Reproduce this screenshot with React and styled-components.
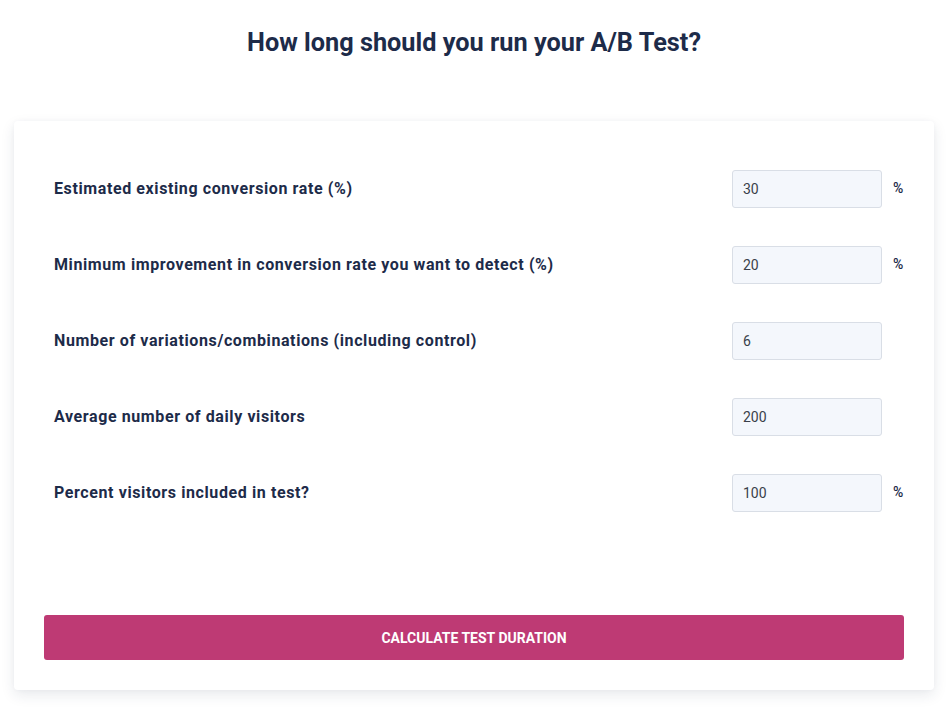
import React, { useState } from 'react'
import styled, { createGlobalStyle } from 'styled-components'

const Global = createGlobalStyle`
  html, body {
    margin: 0;
    padding: 0;
    background: #fff;
    font-family: Roboto, "Liberation Sans", Arial, sans-serif;
  }
`

const Page = styled.div`
  padding: 0 15px 24px 14px;
`

const Title = styled.h1`
  margin: 0;
  padding-top: 28px;
  height: 121px;
  box-sizing: border-box;
  text-align: center;
  font-size: 25.3px;
  font-weight: 700;
  line-height: 30px;
  color: #1d2b49;
`

const Card = styled.div`
  background: #fff;
  border-radius: 4px;
  box-shadow: 0 5px 14px rgba(30, 45, 80, 0.1), 0 0 4px rgba(30, 45, 80, 0.03);
  padding: 49px 30px 30px;
`

const Rows = styled.div`
  display: flex;
  flex-direction: column;
  gap: 38px;
  padding-left: 10px;
`

const Row = styled.div`
  display: flex;
  align-items: center;
`

const Label = styled.label`
  flex: 1;
  font-size: 16px;
  font-weight: 700;
  letter-spacing: 0.6px;
  color: #1d2b49;
  margin-top: -1px;
`

const Input = styled.input`
  width: 150px;
  height: 38px;
  box-sizing: border-box;
  border: 1px solid #d9dee6;
  border-radius: 3px;
  background: #f4f7fc;
  padding: 0 10px;
  font-family: inherit;
  font-size: 14px;
  color: #3a3f4a;
  outline: none;
`

const Unit = styled.span`
  width: 22px;
  padding-left: 11px;
  box-sizing: border-box;
  font-size: 14px;
  font-weight: 500;
  color: #1d2b49;
  margin-top: -2px;
`

const Button = styled.button`
  display: block;
  width: 100%;
  height: 45px;
  margin-top: 103px;
  border: none;
  border-radius: 3px;
  background: #be3a74;
  color: #fff;
  font-family: inherit;
  font-size: 14px;
  font-weight: 700;
  text-transform: uppercase;
  cursor: pointer;
`

const fields = [
  { key: 'rate', label: 'Estimated existing conversion rate (%)', value: '30', unit: '%' },
  { key: 'imp', label: 'Minimum improvement in conversion rate you want to detect (%)', value: '20', unit: '%' },
  { key: 'vars', label: 'Number of variations/combinations (including control)', value: '6', unit: '' },
  { key: 'daily', label: 'Average number of daily visitors', value: '200', unit: '' },
  { key: 'pct', label: 'Percent visitors included in test?', value: '100', unit: '%' },
]

export default function App() {
  const [vals, setVals] = useState(
    Object.fromEntries(fields.map(f => [f.key, f.value]))
  )
  const update = (k, v) => setVals(s => ({ ...s, [k]: v }))

  return (
    <Page>
      <Global />
      <Title>How long should you run your A/B Test?</Title>
      <Card>
        <Rows>
          {fields.map(f => (
            <Row key={f.key}>
              <Label htmlFor={f.key}>{f.label}</Label>
              <Input id={f.key} value={vals[f.key]} onChange={e => update(f.key, e.target.value)} />
              <Unit>{f.unit}</Unit>
            </Row>
          ))}
        </Rows>
        <Button type="button">Calculate test duration</Button>
      </Card>
    </Page>
  )
}
